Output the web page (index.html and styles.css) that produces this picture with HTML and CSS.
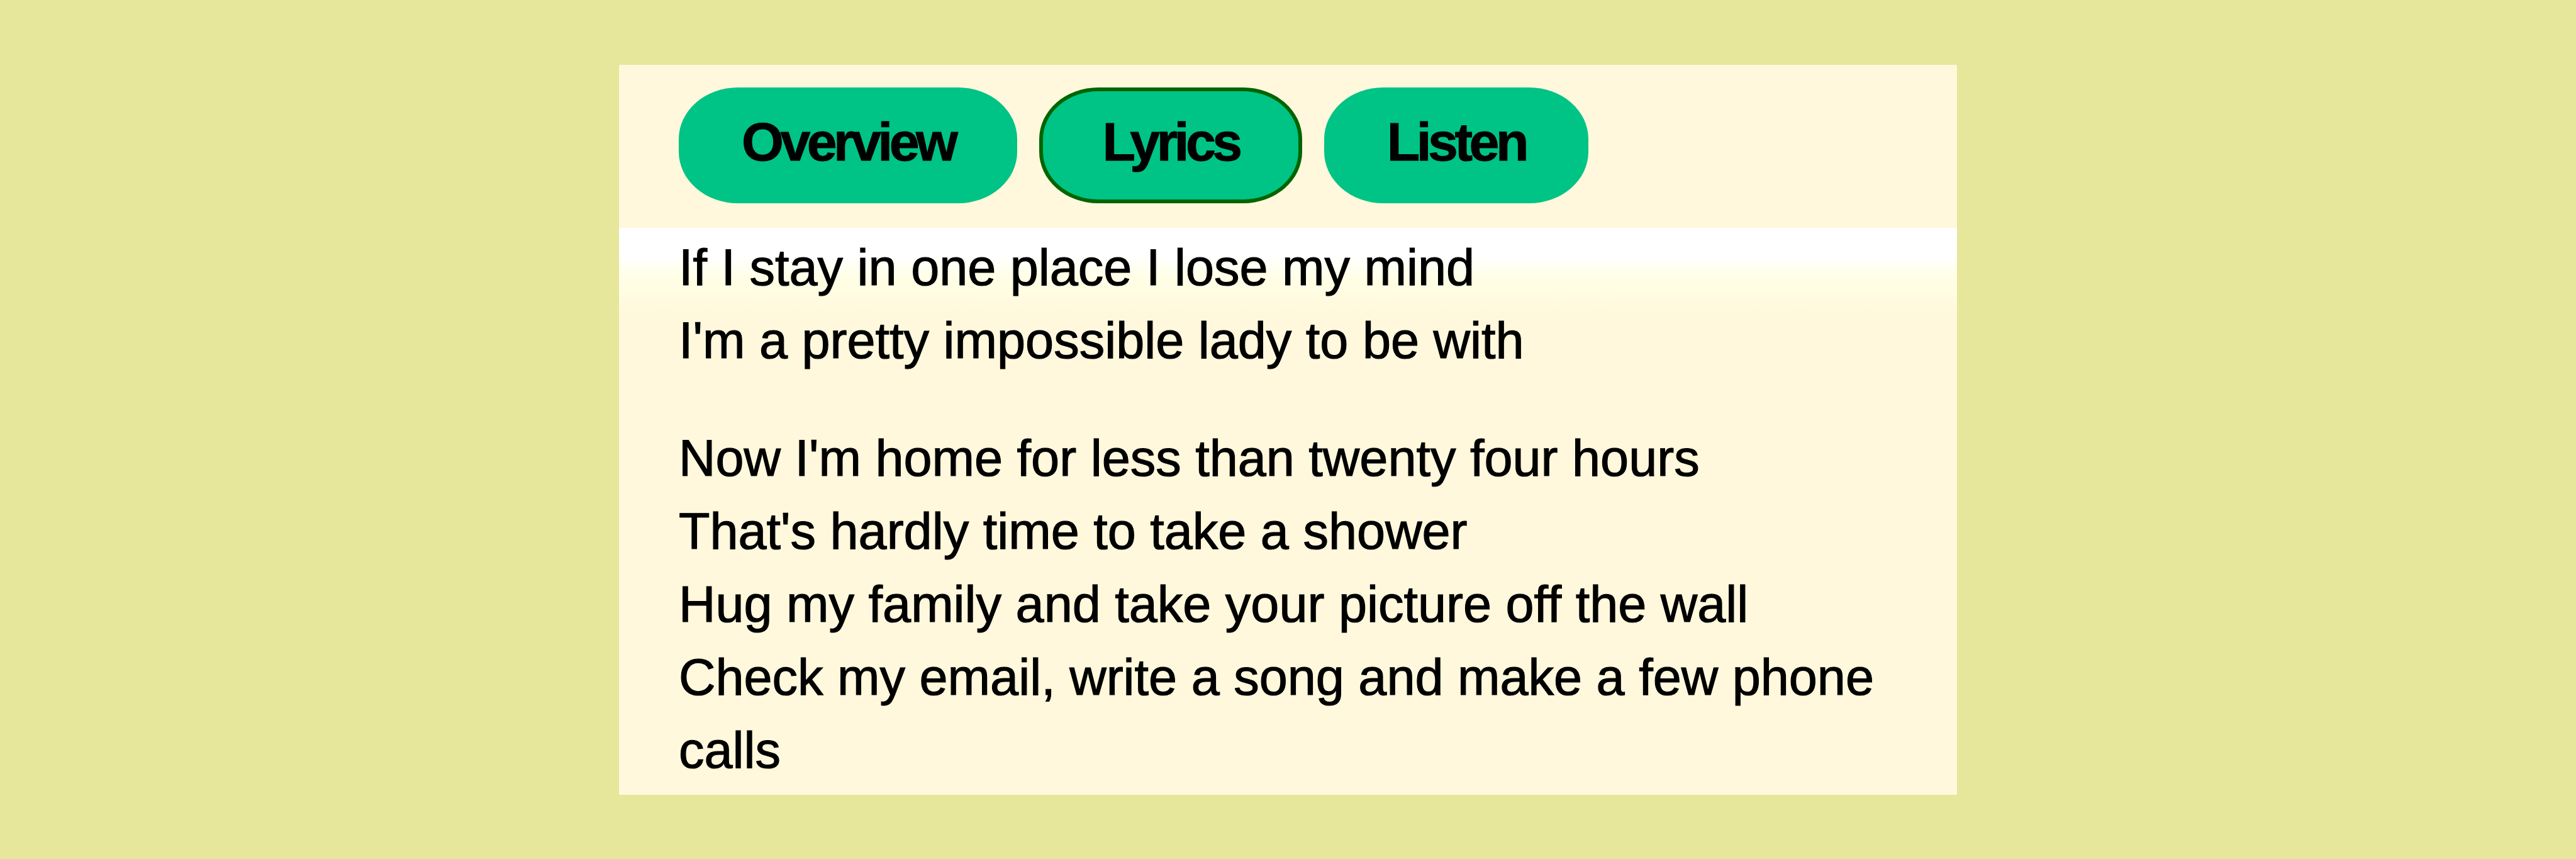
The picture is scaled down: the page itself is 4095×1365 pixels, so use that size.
FILE: index.html
```html
<!DOCTYPE html>
<html lang="en">
<head>
<meta charset="utf-8">
<title>Lyrics</title>
<link rel="stylesheet" href="styles.css">
</head>
<body>
  <main class="card">
    <nav class="tabs">
      <button class="tab">Overview</button>
      <button class="tab tab-active">Lyrics</button>
      <button class="tab">Listen</button>
    </nav>
    <section class="lyrics">
      <div class="stanza">
        <div class="line">If I stay in one place I lose my mind</div>
        <div class="line">I'm a pretty impossible lady to be with</div>
      </div>
      <div class="stanza">
        <div class="line">Now I'm home for less than twenty four hours</div>
        <div class="line">That's hardly time to take a shower</div>
        <div class="line">Hug my family and take your picture off the wall</div>
        <div class="line">Check my email, write a song and make a few phone calls</div>
      </div>
    </section>
  </main>
</body>
</html>
```

FILE: styles.css
```css
html, body {
  margin: 0;
  padding: 0;
}

body {
  height: 100vh;
  background: #e6e79a;
  display: flex;
  align-items: center;
  justify-content: center;
  font-family: "Liberation Sans", Arial, Helvetica, sans-serif;
  color: #000;
}

.card {
  width: 2127px;
  box-sizing: border-box;
  background: #fff8dc;
  display: flex;
  flex-direction: column;
}

.tabs {
  display: flex;
  gap: 35px;
  padding: 36px 95px 39px;
}

.tab {
  box-sizing: border-box;
  height: 184px;
  padding: 0 100px 10px;
  border: none;
  border-radius: 94px / 82px;
  background: #00c386;
  color: #000;
  font-family: "Liberation Sans", Arial, Helvetica, sans-serif;
  font-weight: bold;
  font-size: 86px;
  letter-spacing: -5.5px;
  -webkit-text-stroke: 1px #000;
  display: flex;
  align-items: center;
  justify-content: center;
  cursor: pointer;
}

.tab-active {
  border: 6px solid #006400;
  padding: 0 94px 10px;
}

.lyrics {
  padding: 5px 95px 13px;
  font-size: 81px;
  line-height: 116px;
  -webkit-text-stroke: 1.2px #000;
  background: linear-gradient(to bottom, #ffffff 0px, #ffffff 45px, #ffffe6 80px, #fff8dc 135px);
  display: flex;
  flex-direction: column;
  gap: 71px;
}

.line {
  margin: 0;
}
```
